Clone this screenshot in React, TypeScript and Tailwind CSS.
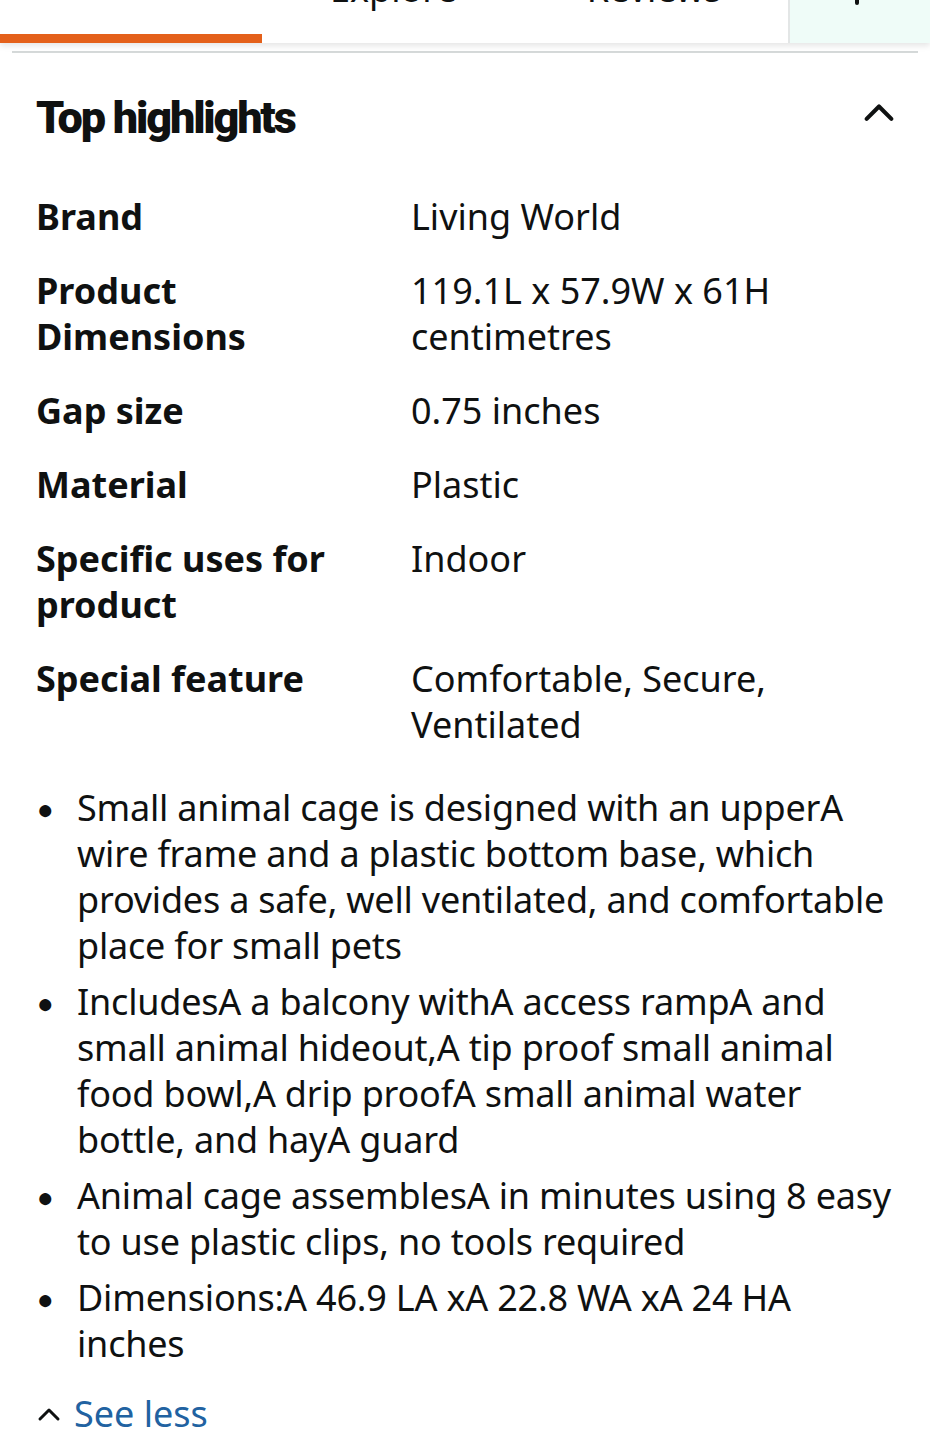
import React from 'react';

const specs: [string, string][] = [
  ['Brand', 'Living World'],
  ['Product Dimensions', '119.1L x 57.9W x 61H centimetres'],
  ['Gap size', '0.75 inches'],
  ['Material', 'Plastic'],
  ['Specific uses for product', 'Indoor'],
  ['Special feature', 'Comfortable, Secure, Ventilated'],
];

const bullets = [
  'Small animal cage is designed with an upperA wire frame and a plastic bottom base, which provides a safe, well ventilated, and comfortable place for small pets',
  'IncludesA a balcony withA access rampA and small animal hideout,A tip proof small animal food bowl,A drip proofA small animal water bottle, and hayA guard',
  'Animal cage assemblesA in minutes using 8 easy to use plastic clips, no tools required',
  'Dimensions:A 46.9 LA xA 22.8 WA xA 24 HA inches',
];

function ChevronUp({ className }: { className?: string }) {
  return (
    <svg viewBox="0 0 24 16" className={className} fill="none" stroke="currentColor" strokeWidth="3" strokeLinecap="round" strokeLinejoin="round">
      <path d="M3 13 L12 4 L21 13" />
    </svg>
  );
}

export default function App() {
  return (
    <div className="bg-white min-h-[1440px] text-[#0f1111] font-['Noto_Sans',sans-serif]">
      {/* Tab bar (scrolled, labels cut off) */}
      <div className="relative z-10 flex h-[43px] overflow-hidden bg-white shadow-[0_3px_6px_rgba(0,0,0,0.10)]">
        <div className="w-[262px] shrink-0 border-b-[9px] border-[#e4601a]" />
        <div className="flex flex-1 text-[36px] leading-[36px]">
          <span className="ml-[68px] -mt-[29px]">Explore</span>
          <span className="ml-[130px] -mt-[29px]">Reviews</span>
        </div>
        <div className="flex w-[142px] shrink-0 justify-center border-l-2 border-[#e3e6e6] bg-[#effcf8]">
          <div className="ml-[-6px] h-[5px] w-[4px] rounded-b-full bg-[#0f1111]" />
        </div>
      </div>
      <div className="mx-3 mt-[8px] h-[2px] bg-[#d5d9d9]" />

      <div className="px-9">
        {/* Heading */}
        <div className="flex items-start justify-between pt-[40px]">
          <h2 className="font-['Roboto',sans-serif] text-[45px] font-black leading-[50px] tracking-[-2.2px]">
            Top highlights
          </h2>
          <ChevronUp className="mt-[8px] mr-[-3px] h-[22px] w-[36px] text-[#0f1111]" />
        </div>

        {/* Specs table */}
        <div className="mt-[51px] flex flex-col gap-[28px] text-[36px] leading-[46px]">
          {specs.map(([k, v]) => (
            <div key={k} className="grid grid-cols-[375px_1fr]">
              <div className="pr-10 font-bold">{k}</div>
              <div>{v}</div>
            </div>
          ))}
        </div>

        {/* Bullets */}
        <ul className="mt-[37px] flex flex-col gap-[10px] text-[36px] leading-[46px] tracking-[-0.2px]">
          {bullets.map((b) => (
            <li key={b} className="flex">
              <span className="w-[41px] shrink-0 pl-[1px] text-[28px] leading-[46px]">●</span>
              <span>{b}</span>
            </li>
          ))}
        </ul>

        {/* See less */}
        <div className="mt-[24px] flex items-center gap-[12px] text-[36px] leading-[46px]">
          <ChevronUp className="h-[16px] w-[26px] text-[#0f1111]" />
          <span className="text-[#2162a1]">See less</span>
        </div>
      </div>
    </div>
  );
}
